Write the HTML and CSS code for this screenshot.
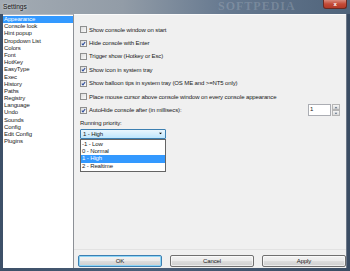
FILE: index.html
```html
<!DOCTYPE html>
<html>
<head>
<meta charset="utf-8">
<link rel="stylesheet" href="styles.css">
</head>
<body>
<div class="window">
  <div class="titlebar">
    <span class="title">Settings</span>
    <span class="watermark">SOFTPEDIA</span>
    <div class="close">x</div>
  </div>
  <div class="client">
    <ul class="nav">
      <li class="sel">Appearance</li>
      <li>Console look</li>
      <li>Hint popup</li>
      <li>Dropdown List</li>
      <li>Colors</li>
      <li>Font</li>
      <li>HotKey</li>
      <li>EasyType</li>
      <li>Exec</li>
      <li>History</li>
      <li>Paths</li>
      <li>Registry</li>
      <li>Language</li>
      <li>Undo</li>
      <li>Sounds</li>
      <li>Config</li>
      <li>Edit Config</li>
      <li>Plugins</li>
    </ul>
    <div class="main">
      <div class="panel">
        <div class="row"><span class="cb"></span><span>Show console window on start</span></div>
        <div class="row"><span class="cb"><svg viewBox="0 0 6 6"><path d="M1 3.2 L2.4 4.6 L5 1.2" /></svg></span><span>Hide console with Enter</span></div>
        <div class="row"><span class="cb"></span><span>Trigger show (Hotkey or Esc)</span></div>
        <div class="row"><span class="cb"><svg viewBox="0 0 6 6"><path d="M1 3.2 L2.4 4.6 L5 1.2" /></svg></span><span>Show icon in system tray</span></div>
        <div class="row"><span class="cb"><svg viewBox="0 0 6 6"><path d="M1 3.2 L2.4 4.6 L5 1.2" /></svg></span><span>Show balloon tips in system tray (OS ME and &gt;=NT5 only)</span></div>
        <div class="row"><span class="cb"></span><span>Place mouse cursor above console window on every console appearance</span></div>
        <div class="row"><span class="cb"><svg viewBox="0 0 6 6"><path d="M1 3.2 L2.4 4.6 L5 1.2" /></svg></span><span class="grow">AutoHide console after (in millisecs):</span>
          <div class="spin">
            <div class="spin-input">1</div>
            <div class="spin-btns">
              <div class="sb"><svg viewBox="0 0 6 4"><path d="M1 3 L3 1 L5 3 Z"/></svg></div>
              <div class="sb"><svg viewBox="0 0 6 4"><path d="M1 1 L3 3 L5 1 Z"/></svg></div>
            </div>
          </div>
        </div>
        <div class="label">Running priority:</div>
        <div class="combo-wrap">
          <div class="combo"><span>1 - High</span><svg viewBox="0 0 6 4"><path d="M1 1 L3 3 L5 1 Z"/></svg></div>
          <ul class="droplist">
            <li>-1 - Low</li>
            <li>0 - Normal</li>
            <li class="sel">1 - High</li>
            <li>2 - Realtime</li>
          </ul>
        </div>
      </div>
      <div class="buttons">
        <div class="btn default">OK</div>
        <div class="btn">Cancel</div>
        <div class="btn">Apply</div>
      </div>
    </div>
  </div>
</div>
</body>
</html>
```
FILE: styles.css
```css
* { box-sizing: border-box; }
html, body { margin: 0; padding: 0; }
body {
  width: 350px;
  height: 271px;
  overflow: hidden;
  font-family: "Liberation Sans", Arial, sans-serif;
  font-size: 6px;
  letter-spacing: -0.12px;
  color: #1a1a1a;
}
.window {
  width: 350px;
  height: 271px;
  display: flex;
  flex-direction: column;
  background: linear-gradient(to right, #3d5068, #4a5e78 40%, #3a4c63);
}
.titlebar {
  position: relative;
  height: 14px;
  flex: none;
  overflow: hidden;
  background: linear-gradient(to right, #a3abb3 0%, #929ca7 35%, #65788f 65%, #50647b 100%);
}
.title {
  position: absolute;
  left: 3px;
  top: 3px;
  font-size: 6.6px;
  letter-spacing: 0;
  color: #141414;
  text-shadow: 0 0 3px rgba(255,255,255,0.7);
}
.watermark {
  position: absolute;
  left: 218px;
  top: 0;
  font-family: "Liberation Serif", serif;
  font-size: 12px;
  line-height: 13px;
  letter-spacing: 1px;
  color: rgba(255,255,255,0.16);
  font-weight: bold;
}
.close {
  position: absolute;
  right: 3px;
  top: 0;
  width: 24px;
  height: 9px;
  border-radius: 0 0 3px 3px;
  background: linear-gradient(#d98c7e, #c44a36 50%, #b13a28);
  border: 1px solid #6b2a22;
  border-top: none;
  color: #fff;
  font-weight: bold;
  font-size: 6px;
  line-height: 8px;
  text-align: center;
}
.client {
  flex: none;
  height: 254px;
  margin: 0 3px;
  display: flex;
}
.nav {
  list-style: none;
  margin: 0;
  padding: 1px 0 0 0;
  width: 71px;
  background: #fff;
  border-top: 1px solid #b8bcc2;
  border-right: 1px solid #8c9096;
}
.nav li {
  height: 7.2px;
  line-height: 7.2px;
  padding-left: 1px;
  white-space: nowrap;
}
.nav li.sel {
  background: #3399ff;
  color: #fff;
}
.main {
  flex: 1;
  background: #f0f0f0;
  display: flex;
  flex-direction: column;
  border-right: 1px solid #6d7888;
}
.panel {
  height: 236px;
  flex: none;
  padding: 8px 0 0 6px;
  border-top: 1px solid #fbfbfb;
  border-bottom: 1px solid #e2e2e2;
  display: flex;
  flex-direction: column;
}
.row {
  height: 13.4px;
  display: flex;
  align-items: center;
  white-space: nowrap;
}
.grow { flex: 1; }
.cb {
  width: 7px;
  height: 7px;
  margin-right: 2px;
  border: 1px solid #8e8f8f;
  background: linear-gradient(135deg, #dcdcdc, #fafafa);
  display: flex;
  align-items: center;
  justify-content: center;
}
.cb svg {
  width: 5px;
  height: 5px;
}
.cb path {
  fill: none;
  stroke: #2a4a9a;
  stroke-width: 1.3;
}
.spin {
  display: flex;
  height: 12px;
  margin-right: 6px;
}
.spin-input {
  width: 23px;
  height: 12px;
  background: #fff;
  border: 1px solid #abadb3;
  padding-left: 1px;
  line-height: 9px;
}
.spin-btns {
  width: 9px;
  display: flex;
  flex-direction: column;
  padding-left: 1px;
}
.sb {
  flex: 1;
  background: linear-gradient(#f6f6f6, #dadada);
  border: 1px solid #b5b5b5;
  display: flex;
  align-items: center;
  justify-content: center;
}
.sb svg { width: 4px; height: 3px; }
.sb path { fill: #4c607a; }
.label {
  margin-top: 2px;
  height: 8px;
  line-height: 8px;
}
.combo-wrap {
  position: relative;
  margin-top: 2px;
  width: 86px;
}
.combo {
  height: 10px;
  border: 1px solid #3c7fb1;
  border-radius: 1px;
  background: linear-gradient(#eaf6fd, #bee6fd);
  display: flex;
  align-items: center;
  justify-content: space-between;
  padding: 0 2px 0 2px;
}
.combo svg { width: 5px; height: 3px; }
.combo path { fill: #000; }
.droplist {
  position: absolute;
  left: 0;
  top: 10px;
  width: 86px;
  list-style: none;
  margin: 0;
  padding: 1px 0;
  background: #fff;
  border: 1px solid #646464;
}
.droplist li {
  height: 7.3px;
  line-height: 7.3px;
  padding-left: 1px;
}
.droplist li.sel {
  background: #3399ff;
  color: #fff;
}
.buttons {
  display: flex;
  gap: 8px;
  padding: 5px 0 0 4px;
}
.btn {
  width: 84px;
  height: 12px;
  border: 1px solid #707070;
  border-radius: 2px;
  background: linear-gradient(#f2f2f2 0%, #ebebeb 50%, #dddddd 51%, #cfcfcf 100%);
  text-align: center;
  line-height: 10px;
  box-shadow: inset 0 0 0 1px rgba(255,255,255,0.6);
}
.btn.default {
  border-color: #3c7fb1;
  box-shadow: inset 0 0 0 1px #8ed5f7;
}
```
